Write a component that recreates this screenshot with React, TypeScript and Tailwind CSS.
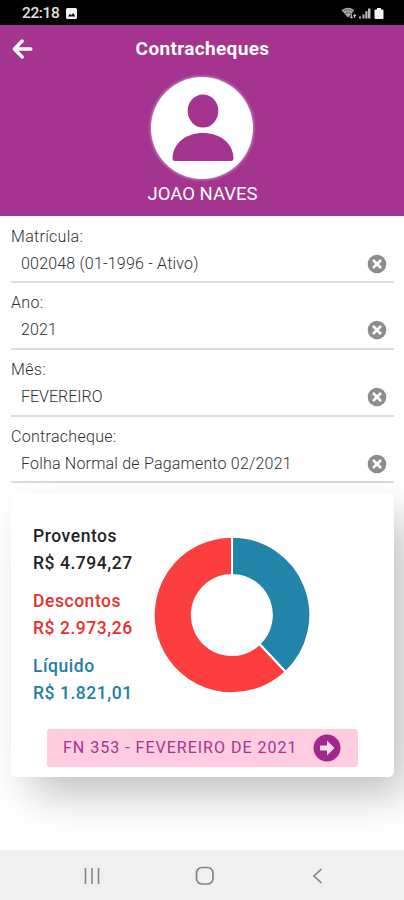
const PURPLE = "#a4348f";

const fields = [
  { label: "Matrícula:", value: "002048 (01-1996 - Ativo)", spacing: "tracking-[0.2px]" },
  { label: "Ano:", value: "2021", spacing: "tracking-[0.15px]" },
  { label: "Mês:", value: "FEVEREIRO", spacing: "tracking-[0px]" },
  { label: "Contracheque:", value: "Folha Normal de Pagamento 02/2021", spacing: "tracking-[0.2px]" },
];

const totals = [
  { label: "Proventos", value: "R$ 4.794,27", color: "text-[#242424]" },
  { label: "Descontos", value: "R$ 2.973,26", color: "text-[#e8302f]" },
  { label: "Líquido", value: "R$ 1.821,01", color: "text-[#2280a2]" },
];

function StatusBar() {
  return (
    <div className="flex h-[25px] items-center bg-black pr-[20px] pl-[22px] text-[#e0e0e0]">
      <span className="pt-[2px] text-[15.5px] leading-none font-medium tracking-[-0.4px]">22:18</span>
      <svg className="mt-[2px] ml-[7px]" width="11" height="11" viewBox="0 0 11 11">
        <rect width="11" height="11" rx="1.5" fill="#f2f2f2" />
        <path d="M2 8.6 4 5.8l1.4 1.5 1.9-2.4L9.3 8.6z" fill="#111" />
      </svg>
      <svg className="mt-[2px] ml-auto" width="43" height="14" viewBox="0 0 43 14">
        <path d="M0.5 3.6C4.5-.1 9.8-.1 13.3 3.6L7 10.5z" fill="#aaa" />
        <path d="M1.5 4.7Q7 .8 12.3 4.7M3.3 6.8Q7 4.2 10.6 6.8" fill="none" stroke="#444" strokeWidth=".8" />
        <path d="M10.3 7v4M8.8 9.6l1.5 1.6L11.8 9.6M13.7 11V7.7M12.4 9l1.3-1.4L15 9" fill="none" stroke="#ddd" strokeWidth="1" />
        <path d="M18 9.5h2v2h-2zM21.5 7.5h2v4h-2zM24.3 4.3h2.2v7.2h-2.2zM27 1.5h2.5v10H27z" fill="#b8b8b8" />
        <path d="M36 1h4v1.6h1.5q1 0 1 1v7.4q0 1-1 1h-7q-1 0-1-1V3.6q0-1 1-1H36z" fill="#f5f5f5" />
      </svg>
    </div>
  );
}

function Header() {
  return (
    <header className="h-[191px] bg-[#a4348f] text-white">
      <div className="grid h-[48px] grid-cols-[52px_1fr_52px] items-center">
        <svg className="ml-[12px]" width="22" height="22" viewBox="0 0 22 22" fill="none" stroke="white" strokeWidth="3.4" strokeLinecap="round" strokeLinejoin="round">
          <path d="M10.2 3 2.4 11l7.8 8M3 11h15.8" />
        </svg>
        <h1 className="-mt-px pl-px text-center text-[19px] leading-none font-bold tracking-[0.35px]">Contracheques</h1>
      </div>
      <div className="mx-auto mt-[4px] h-[102px] w-[102px] rounded-full bg-white shadow-[0_0_3px_1px_rgba(255,255,255,0.4)]">
        <svg width="102" height="102" viewBox="0 0 102 102" fill={PURPLE}>
          <ellipse cx="52" cy="34" rx="15.3" ry="16.5" />
          <path d="M21.500 80.500C22.500 65.500 35.500 56 52 56S81.500 65.500 82.500 80.500q.2 3.500-2.500 3.500H24Q21.300 84 21.500 80.500z" />
        </svg>
      </div>
      <p className="mt-[4px] pl-px text-center text-[18.5px] leading-[22px]">JOAO NAVES</p>
    </header>
  );
}

function ClearIcon() {
  return (
    <svg width="20" height="20" viewBox="0 0 20 20">
      <circle cx="10" cy="10" r="9.3" fill="#8d8d8d" />
      <path d="m6 6 8 8M14 6l-8 8" stroke="white" strokeWidth="2.6" />
    </svg>
  );
}

// Liquid share first, discounts fill the rest of the ring
function Donut() {
  return (
    <svg width="158" height="158" viewBox="-79 -79 158 158" stroke="white" strokeWidth="2">
      <path d="M0-78.300A78.300 78.300 0 0 1 53.700 57L27.400 29A40 40 0 0 0 0-40z" fill="#2184a8" />
      <path d="M53.700 57A78.300 78.300 0 1 1 0-78.300V-40A40 40 0 1 0 27.400 29z" fill="#fd3e3e" />
    </svg>
  );
}

export default function App() {
  return (
    <div className="flex h-[900px] w-[404px] flex-col overflow-hidden bg-white font-['Roboto','Liberation_Sans',sans-serif]">
      <StatusBar />
      <Header />

      <main className="flex-1 overflow-hidden pt-[0.5px] pr-[10px] pl-[11px]">
        {fields.map((field) => (
          <div key={field.label} className="h-[66.7px] border-b-2 border-[#dcdcdc] pt-[9px] text-[#303030]">
            <p className="text-[16px] leading-[22px] font-light tracking-[0.3px]">{field.label}</p>
            <div className="flex h-[32px] items-center justify-between pr-[7px] pl-[10px]">
              <span className={`text-[16px] leading-none font-light ${field.spacing}`}>{field.value}</span>
              <ClearIcon />
            </div>
          </div>
        ))}

        <section className="mt-[9.5px] h-[284px] rounded-[5px] bg-white shadow-[16px_20px_44px_-4px_rgba(0,0,0,0.26)]">
          <div className="flex h-[236px]">
            <div className="w-[142px] pt-[30px] pl-[22px]">
              {totals.map((total) => (
                <div key={total.label} className={`mb-[11px] text-[17.5px] leading-[27px] font-medium tracking-[0.55px] ${total.color}`}>
                  <p>{total.label}</p>
                  <p className="whitespace-nowrap">{total.value}</p>
                </div>
              ))}
            </div>
            <div className="pt-[43px]">
              <Donut />
            </div>
          </div>
          <button className="ml-[36px] flex h-[38px] w-[311px] items-center justify-between rounded-[3px] bg-[#ffcce0] pr-[17px] pl-[16px] text-[#a4348f]">
            <span className="text-[16px] leading-none tracking-[1px]">FN 353 - FEVEREIRO DE 2021</span>
            <svg width="28" height="28" viewBox="0 0 28 28">
              <circle cx="14" cy="14" r="13.5" fill="#9f278d" />
              <path d="M7 11.500h7V6.500l7.500 7.500-7.500 7.500v-5H7z" fill="#ffdcec" />
            </svg>
          </button>
        </section>
      </main>

      <nav className="grid h-[50px] grid-cols-3 items-center bg-[#f0f0f0] px-[35px] pt-[2px]">
        <svg className="ml-[48.5px]" width="16" height="16" viewBox="0 0 16 16" stroke="#858585" strokeWidth="1.6">
          <path d="M1.5 0v16M8 0v16M14.5 0v16" />
        </svg>
        <svg className="ml-[49px]" width="20" height="20" viewBox="0 0 20 20" fill="none" stroke="#858585" strokeWidth="1.7">
          <rect x="1.5" y="1.5" width="16.5" height="16.5" rx="5.5" />
        </svg>
        <svg className="ml-[54px]" width="12" height="18" viewBox="0 0 12 18" fill="none" stroke="#858585" strokeWidth="1.7">
          <path d="M9.500 2 2 9l7.500 7" />
        </svg>
      </nav>
    </div>
  );
}
